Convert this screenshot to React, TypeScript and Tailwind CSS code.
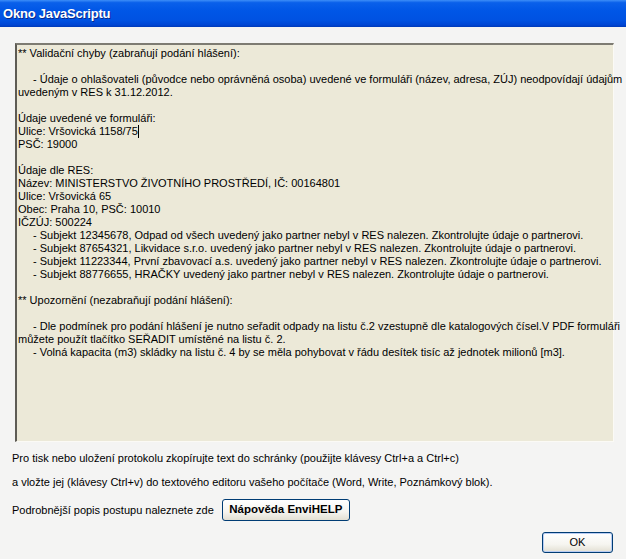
const lines: {text: string; indent?: boolean; caret?: boolean}[] = [
  {text: "** Validační chyby (zabraňují podání hlášení):"},
  {text: ""},
  {
    text: "- Údaje o ohlašovateli (původce nebo oprávněná osoba) uvedené ve formuláři (název, adresa, ZÚJ) neodpovídají údajům",
    indent: true,
  },
  {text: "uvedeným v RES k 31.12.2012."},
  {text: ""},
  {text: "Údaje uvedené ve formuláři:"},
  {text: "Ulice: Vršovická 1158/75", caret: true},
  {text: "PSČ: 19000"},
  {text: ""},
  {text: "Údaje dle RES:"},
  {text: "Název: MINISTERSTVO ŽIVOTNÍHO PROSTŘEDÍ, IČ: 00164801"},
  {text: "Ulice: Vršovická 65"},
  {text: "Obec: Praha 10, PSČ: 10010"},
  {text: "IČZÚJ: 500224"},
  {
    text: "- Subjekt 12345678, Odpad od všech uvedený jako partner nebyl v RES nalezen. Zkontrolujte údaje o partnerovi.",
    indent: true,
  },
  {
    text: "- Subjekt 87654321, Likvidace s.r.o. uvedený jako partner nebyl v RES nalezen. Zkontrolujte údaje o partnerovi.",
    indent: true,
  },
  {
    text: "- Subjekt 11223344, První zbavovací a.s. uvedený jako partner nebyl v RES nalezen. Zkontrolujte údaje o partnerovi.",
    indent: true,
  },
  {
    text: "- Subjekt 88776655, HRAČKY uvedený jako partner nebyl v RES nalezen. Zkontrolujte údaje o partnerovi.",
    indent: true,
  },
  {text: ""},
  {text: "** Upozornění (nezabraňují podání hlášení):"},
  {text: ""},
  {
    text: "- Dle podmínek pro podání hlášení je nutno seřadit odpady na listu č.2 vzestupně dle katalogových čísel.V PDF formuláři",
    indent: true,
  },
  {text: "můžete použít tlačítko SEŘADIT umístěné na listu č. 2."},
  {
    text: "- Volná kapacita (m3) skládky na listu č. 4 by se měla pohybovat v řádu desítek tisíc až jednotek milionů [m3].",
    indent: true,
  },
];

const App = () => {
  return (
    <div className="w-[626px] h-[559px] bg-[#f4f4f3] flex flex-col overflow-hidden font-['Liberation_Sans',Arial,sans-serif] text-black">
      {/* Title bar */}
      <div className="h-[27px] shrink-0 flex items-center pl-[3px] bg-[linear-gradient(to_bottom,#3d8ef8_0%,#0a60ea_10%,#0056e6_40%,#0052e2_75%,#0046d4_92%,#003ab8_100%)]">
        <span className="text-white font-bold text-[13px] [text-shadow:1px_1px_0_#0b2a8a] tracking-[-0.2px]">
          Okno JavaScriptu
        </span>
      </div>

      {/* Text area */}
      <div className="pl-[15px] pt-[16px]">
        <div className="w-[599px] h-[399px] border-t-2 border-l-2 border-r border-b border-t-[#7d7b72] border-l-[#5e5c55] border-r-[#fbfaf5] border-b-[#fbfaf5] bg-[#ece9d8]">
          <div className="pt-[2px] pl-[1px] text-[11px] leading-[13px]">
            {lines.map((line, i) => (
              <div
                key={i}
                className={`h-[13px] whitespace-nowrap ${line.indent ? "pl-[15px]" : ""}`}
              >
                {line.text}
                {line.caret && (
                  <span className="inline-block w-px h-[13px] bg-black align-top" />
                )}
              </div>
            ))}
          </div>
        </div>
      </div>

      {/* Info text */}
      <div className="pl-[12px] pt-[10px] text-[11px]">
        <p className="leading-[13px]">
          Pro tisk nebo uložení protokolu zkopírujte text do schránky (použijte klávesy Ctrl+a a Ctrl+c)
        </p>
        <p className="leading-[13px] mt-[11px]">
          a vložte jej (klávesy Ctrl+v) do textového editoru vašeho počítače (Word, Write, Poznámkový blok).
        </p>
        <div className="flex items-center mt-[10px] gap-[8px]">
          <span>Podrobnější popis postupu naleznete zde</span>
          <button className="h-[22px] w-[128px] rounded-[3px] border border-[#003c74] bg-[linear-gradient(to_bottom,#ffffff_0%,#f5f4ef_60%,#e3e0d3_100%)] font-bold text-[11.5px]">
            Nápověda EnviHELP
          </button>
        </div>
      </div>

      {/* OK */}
      <div className="flex justify-end pr-[13px] pt-[11px]">
        <button className="w-[71px] h-[21px] rounded-[3px] border border-[#003c74] bg-[linear-gradient(to_bottom,#ffffff_0%,#f6f5f0_60%,#e2dfd2_100%)] shadow-[inset_0_0_0_1px_#b9cdf3] text-[11px]">
          OK
        </button>
      </div>
    </div>
  );
};

export default App;
